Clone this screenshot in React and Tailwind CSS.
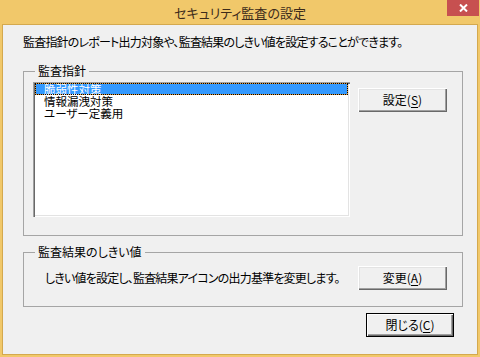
const jp = "font-['Noto_Sans_CJK_JP','Noto_Sans',sans-serif] [font-feature-settings:'palt']";

const Button = ({ label, accel, isDefault, className = "" }) => {
  return (
    <div
      className={`flex h-[24px] items-center justify-center bg-[#f0f0f0] text-[12px] leading-none text-black ${
        isDefault
          ? "w-[88px] border border-black shadow-[inset_1px_1px_0_#fff,inset_-1px_-1px_0_#696969,inset_-2px_-2px_0_#a0a0a0]"
          : "w-[89px] shadow-[inset_1px_1px_0_#fff,inset_-1px_-1px_0_#696969,inset_-2px_-2px_0_#a0a0a0,inset_2px_2px_0_#e3e3e3]"
      } ${className}`}
    >
      <span className="pb-[1px]">
        {label}(<span className="underline underline-offset-2">{accel}</span>)
      </span>
    </div>
  );
};

const GroupBox = ({ title, className = "", children }) => {
  return (
    <div className={`relative border border-[#a5a5a5] ${className}`}>
      <span className="absolute -top-[9px] left-[11px] whitespace-nowrap bg-[#f0f0f0] px-[3px] text-[12px] leading-[16px] text-black">
        {title}
      </span>
      {children}
    </div>
  );
};

export default function App() {
  const items = ["脆弱性対策", "情報漏洩対策", "ユーザー定義用"];

  return (
    <div className={`flex h-[357px] w-[480px] flex-col bg-[#f1c86a] px-[2px] pb-[2px] ${jp}`}>
      {/* タイトルバー */}
      <div className="relative flex h-[24px] shrink-0 items-center justify-center">
        <span className="text-[13px] leading-none text-[#3d2b1a]">セキュリティ監査の設定</span>
        <div className="absolute -right-[1px] top-0 flex h-[16px] w-[32px] items-center justify-center bg-[#c75050]">
          <svg width="9" height="8" viewBox="0 0 9 8">
            <path d="M1 0.5 L8 7.5 M8 0.5 L1 7.5" stroke="#fff" strokeWidth="2" fill="none" />
          </svg>
        </div>
      </div>

      {/* クライアント領域 */}
      <div className="flex flex-1 flex-col border border-[#d4a94e] bg-[#f0f0f0] pl-[20px] text-black">
        <p className="mt-[9px] h-[16px] whitespace-nowrap text-[12px] leading-[16px] tracking-[-0.8px]">
          監査指針のレポート出力対象や、監査結果のしきい値を設定することができます。
        </p>

        <GroupBox title="監査指針" className="mt-[21px] h-[165px] w-[440px]">
          <div className="flex pl-[9px] pt-[10px]">
            <div className="h-[135px] w-[317px] bg-white px-[2px] pt-[1px] shadow-[inset_1px_1px_0_#a0a0a0,inset_2px_2px_0_#696969,inset_-1px_-1px_0_#fff,inset_-2px_-2px_0_#e3e3e3]">
              <div className="flex flex-col">
                {items.map((item, i) => (
                  <div
                    key={item}
                    className={`flex h-[12px] items-center whitespace-nowrap pl-[8px] text-[11.5px] leading-[10px] ${
                      i === 0
                        ? "border border-[#e09a3c] bg-[#3399ff] text-white outline outline-1 -outline-offset-1 outline-dotted outline-black"
                        : "border border-transparent"
                    }`}
                  >
                    {item}
                  </div>
                ))}
              </div>
            </div>
            <Button label="設定" accel="S" className="ml-[8px] mt-[6px]" />
          </div>
        </GroupBox>

        <GroupBox title="監査結果のしきい値" className="mt-[16px] h-[55px] w-[440px]">
          <div className="flex items-center pl-[21px] pt-[13px]">
            <span className="w-[313px] whitespace-nowrap text-[12px] leading-[16px] tracking-[-0.8px]">
              しきい値を設定し、監査結果アイコンの出力基準を変更します。
            </span>
            <Button label="変更" accel="A" />
          </div>
        </GroupBox>

        <div className="flex w-[431px] justify-end pt-[6px]">
          <Button label="閉じる" accel="C" isDefault />
        </div>
      </div>
    </div>
  );
}
